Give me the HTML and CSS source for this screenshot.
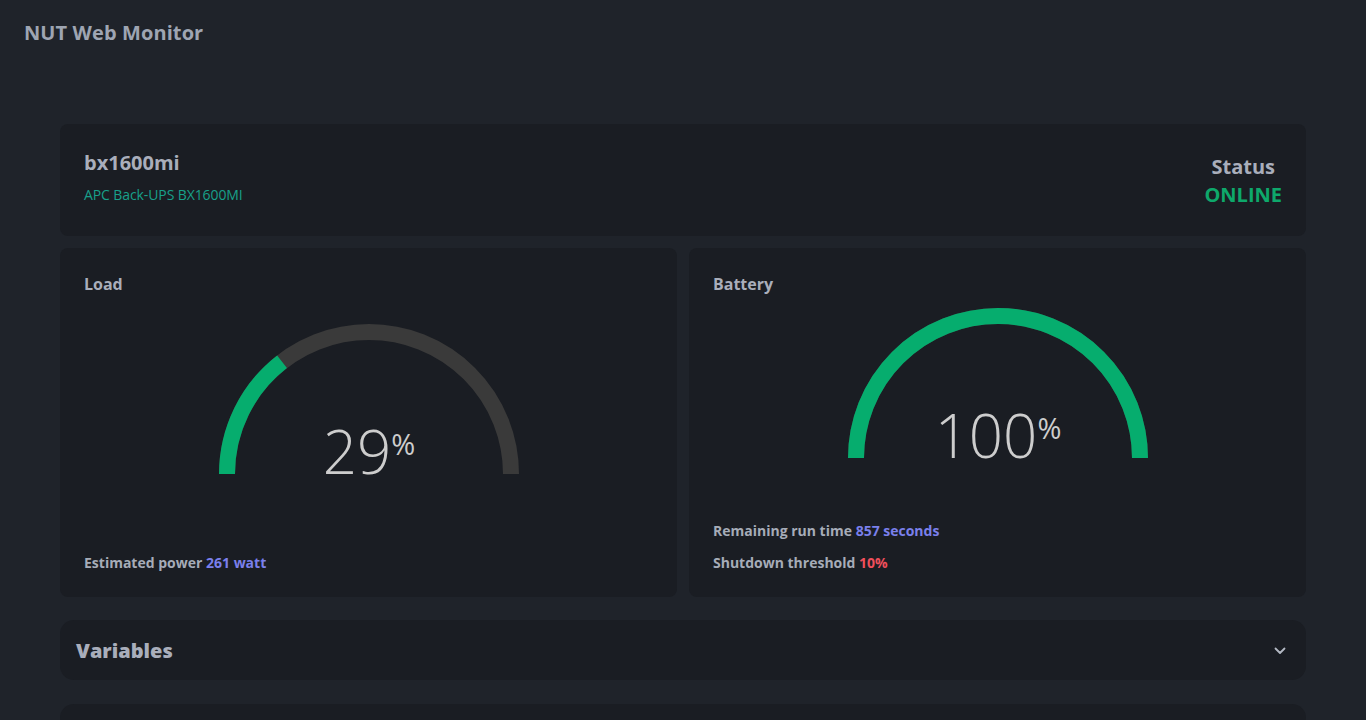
FILE: index.html
```html
<!DOCTYPE html>
<html lang="en">
<head>
<meta charset="utf-8">
<title>NUT Web Monitor</title>
<link rel="stylesheet" href="styles.css">
</head>
<body>
<header class="topbar">
  <h1 class="brand">NUT Web Monitor</h1>
</header>
<main class="container">
  <section class="card device">
    <div class="device-info">
      <div class="device-name">bx1600mi</div>
      <div class="device-model">APC Back-UPS BX1600MI</div>
    </div>
    <div class="status">
      <div class="status-label">Status</div>
      <div class="status-value">ONLINE</div>
    </div>
  </section>

  <div class="grid">
    <section class="card panel">
      <h2 class="panel-title">Load</h2>
      <div class="gauge-area">
        <svg class="gauge" width="300" height="200" viewBox="0 0 300 200">
          <path class="track" d="M 8 150 A 142 142 0 0 1 292 150"/>
          <path class="value" d="M 8 150 A 142 142 0 0 1 292 150" style="stroke-dasharray: 129.4 1000"/>
          <text class="gauge-num" x="150" y="150" text-anchor="middle">29<tspan class="gauge-pct" dy="-19">%</tspan></text>
        </svg>
      </div>
      <div class="panel-foot">
        <p class="stat">Estimated power <span class="blue">261 watt</span></p>
      </div>
    </section>

    <section class="card panel">
      <h2 class="panel-title">Battery</h2>
      <div class="gauge-area">
        <svg class="gauge" width="300" height="200" viewBox="0 0 300 200">
          <path class="track" d="M 8 150 A 142 142 0 0 1 292 150"/>
          <path class="value" d="M 8 150 A 142 142 0 0 1 292 150" style="stroke-dasharray: 446.2 1000"/>
          <text class="gauge-num" x="150" y="150" text-anchor="middle">100<tspan class="gauge-pct" dy="-19">%</tspan></text>
        </svg>
      </div>
      <div class="panel-foot">
        <p class="stat">Remaining run time <span class="blue">857 seconds</span></p>
        <p class="stat">Shutdown threshold <span class="red">10%</span></p>
      </div>
    </section>
  </div>

  <section class="card collapse">
    <h2 class="collapse-title">Variables</h2>
    <svg class="chevron" width="12" height="8" viewBox="0 0 12 8">
      <path d="M1.5 1.5 L6 6 L10.5 1.5" fill="none" stroke="#b4b9c4" stroke-width="1.8" stroke-linecap="round" stroke-linejoin="round"/>
    </svg>
  </section>

  <section class="card collapse"></section>
</main>
</body>
</html>
```

FILE: styles.css
```css
* { box-sizing: border-box; }

html, body {
  margin: 0;
  padding: 0;
}

body {
  background: #1f232a;
  font-family: "Open Sans", "Noto Sans", sans-serif;
  color: #a6acb8;
  height: 720px;
  overflow: hidden;
}

.topbar {
  height: 64px;
  padding: 19px 24px 0;
}

.brand {
  margin: 0;
  font-size: 20px;
  line-height: 28px;
  font-weight: 700;
  color: #9ea5b2;
  letter-spacing: 0.1px;
}

.container {
  margin: 60px 60px 0;
  display: flex;
  flex-direction: column;
}

.card {
  background: #1a1d23;
  border-radius: 8px;
}

.device {
  height: 112px;
  padding: 25px 24px 24px;
  display: flex;
  justify-content: space-between;
  align-items: flex-start;
}

.device-name {
  font-size: 20px;
  line-height: 28px;
  font-weight: 700;
  color: #a9aebb;
}

.device-model {
  margin-top: 8px;
  font-size: 14px;
  line-height: 20px;
  color: #18a08a;
  letter-spacing: -0.1px;
}

.status {
  align-self: center;
  text-align: center;
  font-size: 20px;
  line-height: 28px;
  font-weight: 700;
}

.status-label { color: #a9aebb; }
.status-value { color: #0ea86b; }

.grid {
  margin-top: 12px;
  display: grid;
  grid-template-columns: 1fr 1fr;
  gap: 12px;
}

.panel {
  height: 349px;
  padding: 24px 24px 24px;
  display: flex;
  flex-direction: column;
}

.panel-title {
  margin: 0;
  font-size: 16px;
  line-height: 24px;
  font-weight: 700;
  color: #a9aebb;
}

.gauge-area {
  flex: 1;
  display: flex;
  align-items: center;
  justify-content: center;
  padding-bottom: 1px;
}

.gauge { display: block; }

.track {
  fill: none;
  stroke: #3a3a3a;
  stroke-width: 16;
}

.value {
  fill: none;
  stroke: #06ad6e;
  stroke-width: 16;
}

.gauge-num {
  font-family: "Open Sans", sans-serif;
  font-weight: 300;
  font-size: 60px;
  fill: #cdcdcd;
}

.gauge-pct {
  font-size: 29px;
  font-weight: 400;
}

.panel-foot {
  display: flex;
  flex-direction: column;
  gap: 12px;
}

.stat {
  margin: 0;
  font-size: 14px;
  line-height: 20px;
  font-weight: 700;
  color: #a6acb8;
}

.blue { color: #7a80ec; }
.red { color: #ef4f5b; }

.collapse {
  margin-top: 23px;
  height: 60px;
  border-radius: 14px;
  padding: 1px 20px 0 16px;
  display: flex;
  align-items: center;
  justify-content: space-between;
}

.collapse + .collapse {
  margin-top: 24px;
}

.collapse-title {
  margin: 0;
  font-size: 20px;
  line-height: 28px;
  font-weight: 800;
  color: #a9aebb;
}

.chevron { display: block; }
```
